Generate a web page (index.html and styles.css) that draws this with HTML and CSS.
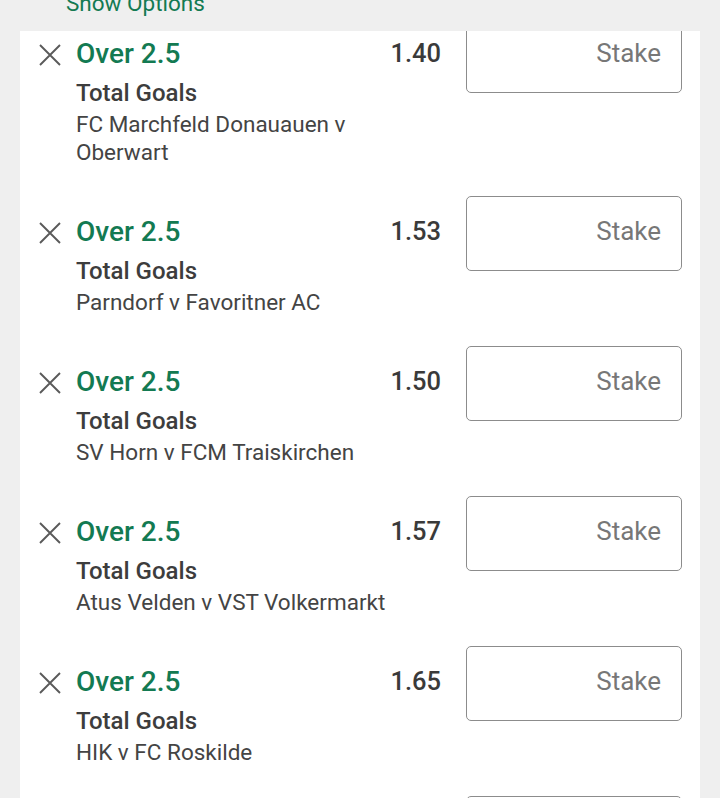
FILE: index.html
```html
<!DOCTYPE html>
<html lang="en">
<head>
    <meta charset="utf-8"/>
    <meta content="width=device-width, initial-scale=1.0" name="viewport"/>
    <title>Bet Slip</title>
    <link rel="stylesheet" href="styles.css">
</head>
<body>
    <div class="slip-top">
        <span class="options-link">Show Options</span>
        <span class="total-stake">10.00</span>
    </div>

    <div class="slip-card">
        <div class="bet-list">
            <div class="bet-row">
                <svg class="remove" viewBox="0 0 22 22"><path d="M1 1 L21 21 M21 1 L1 21"/></svg>
                <div class="selection">
                    <div class="pick">Over 2.5</div>
                    <div class="market">Total Goals</div>
                    <div class="event">FC Marchfeld Donauauen v Oberwart</div>
                </div>
                <div class="price">1.40</div>
                <input class="stake" type="text" placeholder="Stake"/>
            </div>

            <div class="bet-row">
                <svg class="remove" viewBox="0 0 22 22"><path d="M1 1 L21 21 M21 1 L1 21"/></svg>
                <div class="selection">
                    <div class="pick">Over 2.5</div>
                    <div class="market">Total Goals</div>
                    <div class="event">Parndorf v Favoritner AC</div>
                </div>
                <div class="price">1.53</div>
                <input class="stake" type="text" placeholder="Stake"/>
            </div>

            <div class="bet-row">
                <svg class="remove" viewBox="0 0 22 22"><path d="M1 1 L21 21 M21 1 L1 21"/></svg>
                <div class="selection">
                    <div class="pick">Over 2.5</div>
                    <div class="market">Total Goals</div>
                    <div class="event">SV Horn v FCM Traiskirchen</div>
                </div>
                <div class="price">1.50</div>
                <input class="stake" type="text" placeholder="Stake"/>
            </div>

            <div class="bet-row">
                <svg class="remove" viewBox="0 0 22 22"><path d="M1 1 L21 21 M21 1 L1 21"/></svg>
                <div class="selection">
                    <div class="pick">Over 2.5</div>
                    <div class="market">Total Goals</div>
                    <div class="event">Atus Velden v VST Volkermarkt</div>
                </div>
                <div class="price">1.57</div>
                <input class="stake" type="text" placeholder="Stake"/>
            </div>

            <div class="bet-row">
                <svg class="remove" viewBox="0 0 22 22"><path d="M1 1 L21 21 M21 1 L1 21"/></svg>
                <div class="selection">
                    <div class="pick">Over 2.5</div>
                    <div class="market">Total Goals</div>
                    <div class="event">HIK v FC Roskilde</div>
                </div>
                <div class="price">1.65</div>
                <input class="stake" type="text" placeholder="Stake"/>
            </div>

            <div class="bet-row">
                <svg class="remove" viewBox="0 0 22 22"><path d="M1 1 L21 21 M21 1 L1 21"/></svg>
                <div class="selection">
                    <div class="pick">Over 2.5</div>
                    <div class="market">Total Goals</div>
                    <div class="event">Sarpsborg v Odd</div>
                </div>
                <div class="price">1.44</div>
                <input class="stake" type="text" placeholder="Stake"/>
            </div>
        </div>
    </div>

    <div class="slip-footer"></div>
</body>
</html>
```

FILE: styles.css
```css
body {
    font-family: Roboto, "Noto Sans", sans-serif;
    background-color: #efefef;
    margin: 0;
    height: 805px;
    display: flex;
    flex-direction: column;
    overflow: hidden;
}

.slip-top {
    height: 31px;
    flex: none;
    display: flex;
    justify-content: space-between;
    padding: 0 88px 0 66px;
    overflow: hidden;
}

.options-link {
    margin-top: -10px;
    font-size: 22.5px;
    line-height: 26px;
    color: #137a52;
}

.total-stake {
    margin-top: -20px;
    font-size: 20px;
    line-height: 24px;
    color: #777;
}

.slip-card {
    flex: 1;
    margin: 0 20px;
    background-color: #ffffff;
    overflow: hidden;
}

.bet-list {
    margin-top: -29px;
}

.bet-row {
    display: flex;
    align-items: flex-start;
    padding: 0 18px 14px 19px;
}

.remove {
    flex: none;
    width: 22px;
    height: 22px;
    margin-top: 42px;
    margin-right: 15px;
    fill: none;
    stroke: #5a5a5a;
    stroke-width: 1.9;
}

.selection {
    flex: 1;
    margin-top: 36px;
}

.pick {
    font-size: 28px;
    line-height: 32px;
    font-weight: 500;
    color: #137a52;
}

.market {
    margin-top: 8px;
    font-size: 24px;
    line-height: 30px;
    font-weight: 500;
    color: #3d3d3d;
}

.event {
    margin-top: 2px;
    font-size: 22.5px;
    line-height: 28px;
    color: #444;
}

.price {
    margin-top: 35px;
    margin-right: 25px;
    font-size: 25.5px;
    line-height: 32px;
    font-weight: 500;
    color: #3a3a3a;
}

.stake {
    flex: none;
    width: 216px;
    height: 75px;
    margin-top: 16px;
    box-sizing: border-box;
    padding: 0 20px 5px;
    border: 1px solid #8c8c8c;
    border-radius: 5px;
    font-family: Roboto, sans-serif;
    font-size: 26px;
    text-align: right;
    background: #fff;
}

.stake::placeholder {
    color: #777;
}

.slip-footer {
    height: 7px;
    flex: none;
    background-color: #ffffff;
}
```
